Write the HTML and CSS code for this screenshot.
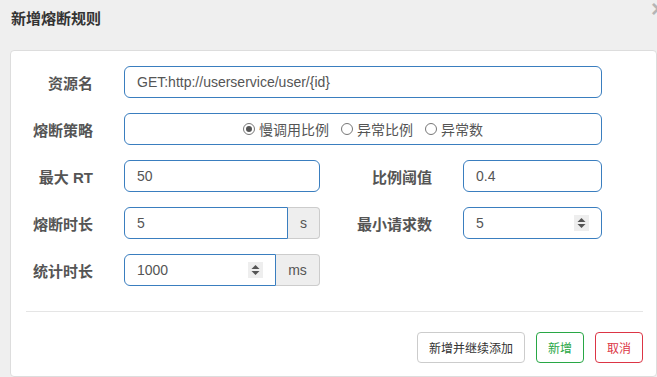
FILE: index.html
```html
<!DOCTYPE html>
<html lang="zh-CN">
<head>
    <meta charset="UTF-8">
    <title>新增熔断规则</title>
    <link rel="stylesheet" href="styles.css">
</head>
<body>
    <div class="dialog">
        <div class="dialog-header">
            <h4 class="dialog-title">新增熔断规则</h4>
            <span class="close">×</span>
        </div>
        <div class="dialog-body">
            <form class="rule-form">
                <label class="form-label">资源名</label>
                <input class="form-input span-3" type="text" value="GET:http://userservice/user/{id}">

                <label class="form-label">熔断策略</label>
                <div class="radio-box span-3">
                    <span class="radio checked"><i></i>慢调用比例</span>
                    <span class="radio"><i></i>异常比例</span>
                    <span class="radio"><i></i>异常数</span>
                </div>

                <label class="form-label">最大 RT</label>
                <input class="form-input" type="text" value="50">
                <label class="form-label">比例阈值</label>
                <input class="form-input" type="text" value="0.4">

                <label class="form-label">熔断时长</label>
                <div class="input-group">
                    <input class="form-input" type="text" value="5">
                    <span class="addon">s</span>
                </div>
                <label class="form-label">最小请求数</label>
                <div class="spin-field">
                    <input type="text" value="5">
                    <span class="spinner"><svg width="15" height="16" viewBox="0 0 15 16"><path d="M3.5 7 L7.5 3 L11.5 7 Z M3.5 9 L7.5 13 L11.5 9 Z" fill="#555"/></svg></span>
                </div>

                <label class="form-label">统计时长</label>
                <div class="input-group">
                    <div class="spin-field">
                        <input type="text" value="1000">
                        <span class="spinner"><svg width="15" height="16" viewBox="0 0 15 16"><path d="M3.5 7 L7.5 3 L11.5 7 Z M3.5 9 L7.5 13 L11.5 9 Z" fill="#555"/></svg></span>
                    </div>
                    <span class="addon addon-ms">ms</span>
                </div>
            </form>
            <div class="divider"></div>
            <div class="actions">
                <button type="button" class="btn">新增并继续添加</button>
                <button type="button" class="btn btn-success">新增</button>
                <button type="button" class="btn btn-danger">取消</button>
            </div>
        </div>
    </div>
</body>
</html>
```

FILE: styles.css
```css
body {
    margin: 0;
    background: #efefef;
    font-family: "Liberation Sans", "Noto Sans CJK SC", sans-serif;
    overflow: hidden;
}

/* cabecera */
.dialog-header {
    display: flex;
    justify-content: space-between;
    align-items: flex-start;
    height: 50px;
    padding-left: 11px;
}

.dialog-title {
    margin: 9px 0 0;
    font-size: 15px;
    line-height: 20px;
    font-weight: bold;
    color: #333;
}

.close {
    margin-right: -8px;
    font-size: 24px;
    line-height: 18px;
    font-weight: bold;
    color: #b5b5b5;
}

/* tarjeta */
.dialog-body {
    margin-left: 10px;
    height: 327px;
    box-sizing: border-box;
    padding-top: 15px;
    background: #fff;
    border: 1px solid #ddd;
    border-radius: 4px;
}

.rule-form {
    display: grid;
    grid-template-columns: 82px 196px 81px 139px;
    grid-auto-rows: 32px;
    column-gap: 31px;
    row-gap: 15px;
    align-items: center;
}

.span-3 {
    grid-column: span 3;
}

.form-label {
    text-align: right;
    font-size: 15px;
    font-weight: bold;
    color: #555;
    white-space: nowrap;
}

.form-input {
    width: 100%;
    height: 32px;
    box-sizing: border-box;
    padding: 0 12px;
    border: 1px solid #3a7ebf;
    border-radius: 6px;
    font-family: inherit;
    font-size: 14px;
    color: #555;
    outline: none;
}

.radio-box {
    height: 32px;
    box-sizing: border-box;
    display: flex;
    justify-content: center;
    align-items: center;
    gap: 12px;
    border: 1px solid #3a7ebf;
    border-radius: 6px;
    font-size: 14px;
    color: #555;
}

.radio {
    display: inline-flex;
    align-items: center;
    gap: 4px;
}

.radio i {
    width: 12px;
    height: 12px;
    box-sizing: border-box;
    display: flex;
    justify-content: center;
    align-items: center;
    border: 1px solid #777;
    border-radius: 50%;
}

.radio.checked i::after {
    content: "";
    width: 6px;
    height: 6px;
    border-radius: 50%;
    background: #555;
}

.input-group {
    display: flex;
    height: 32px;
    min-width: 0;
}

.input-group .form-input {
    flex: 1;
    min-width: 0;
    border-radius: 6px 0 0 6px;
}

.input-group .spin-field {
    flex: 1;
    border-radius: 6px 0 0 6px;
}

.addon {
    width: 32px;
    flex: none;
    box-sizing: border-box;
    display: flex;
    justify-content: center;
    align-items: center;
    background: #eee;
    border: 1px solid #ccc;
    border-left: none;
    border-radius: 0 4px 4px 0;
    font-size: 14px;
    color: #555;
}

.addon-ms {
    width: 44px;
}

.spin-field {
    min-width: 0;
    height: 32px;
    box-sizing: border-box;
    display: flex;
    align-items: center;
    padding: 0 12px;
    border: 1px solid #3a7ebf;
    border-radius: 6px;
}

.spin-field input {
    flex: 1;
    width: 0;
    min-width: 0;
    border: none;
    padding: 0;
    font-family: inherit;
    font-size: 14px;
    color: #555;
    outline: none;
}

.spinner {
    display: flex;
    flex: none;
    background: #eee;
}

.divider {
    height: 1px;
    margin: 25px 13px 0 15px;
    background: #e5e5e5;
}

.actions {
    display: flex;
    justify-content: flex-end;
    gap: 11px;
    margin: 20px 13px 0 0;
}

.btn {
    height: 31px;
    padding: 0 11px;
    background: #fff;
    border: 1px solid #ccc;
    border-radius: 4px;
    font-family: inherit;
    font-size: 12px;
    color: #333;
    cursor: pointer;
}

.btn-success {
    border-color: #28a745;
    color: #28a745;
}

.btn-danger {
    border-color: #dc3545;
    color: #dc3545;
}
```
